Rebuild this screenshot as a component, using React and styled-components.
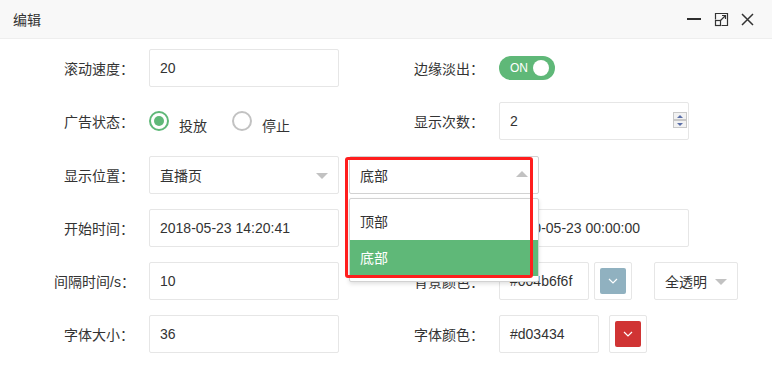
import React from 'react';
import styled, { createGlobalStyle } from 'styled-components';

const GlobalStyle = createGlobalStyle`
  body{
    margin: 0;
    background: #fff;
    font-family: "Liberation Sans", "Noto Sans CJK SC", sans-serif;
    font-size: 14px;
    color: #333;
  }
`;

function App() {
  return (
    <>
      <GlobalStyle />
      <Header>
        <Title>编辑</Title>
        <HeaderTools>
          <Minus />
          <svg width="15" height="15" viewBox="0 0 15 15" fill="none" stroke="#333" strokeWidth="1.2">
            <path d="M1.5 7.5 V1.5 H13.5 V13.5 H7.5" />
            <rect x="1.5" y="8.5" width="5" height="5" />
            <path d="M6.5 8.5 L11.5 3.5 M8 3.5 H11.5 V7" />
          </svg>
          <svg width="13" height="13" viewBox="0 0 13 13" stroke="#333" strokeWidth="1.5">
            <path d="M1 1 L12 12 M12 1 L1 12" />
          </svg>
        </HeaderTools>
      </Header>

      <Form>
        <Row>
          <Item>
            <Label>滚动速度：</Label>
            <Input $w={190}>20</Input>
          </Item>
          <Item>
            <Label>边缘淡出：</Label>
            <Switch>
              <span>ON</span>
              <Knob />
            </Switch>
          </Item>
        </Row>

        <Row $bottom={16}>
          <Item>
            <Label>广告状态：</Label>
            <Radio $checked />
            <RadioText>投放</RadioText>
            <Radio />
            <RadioText>停止</RadioText>
          </Item>
          <Item>
            <Label>显示次数：</Label>
            <Input $w={190}>
              2
              <Spinner>
                <SpinBtn><SpinArrow $up /></SpinBtn>
                <SpinBtn><SpinArrow /></SpinBtn>
              </Spinner>
            </Input>
          </Item>
        </Row>

        <Row>
          <Item>
            <Label>显示位置：</Label>
            <Select $w={190}>
              直播页
              <Arrow />
            </Select>
            <SelectWrap>
              <Select $w={190} $open>
                底部
                <Arrow $up />
              </Select>
              <Dropdown>
                <Option>顶部</Option>
                <Option $active>底部</Option>
              </Dropdown>
              <Highlight />
            </SelectWrap>
          </Item>
        </Row>

        <Row>
          <Item>
            <Label>开始时间：</Label>
            <Input $w={190}>2018-05-23 14:20:41</Input>
          </Item>
          <Item>
            <Label>结束时间：</Label>
            <Input $w={190}>2020-05-23 00:00:00</Input>
          </Item>
        </Row>

        <Row>
          <Item>
            <Label>间隔时间/s：</Label>
            <Input $w={190}>10</Input>
          </Item>
          <Item>
            <Label>背景颜色：</Label>
            <Input $w={90}>#004b6f6f</Input>
            <ColorPicker $gap={5}>
              <ColorSwatch $color="#90b1c0">
                <Chevron />
              </ColorSwatch>
            </ColorPicker>
            <Select $w={84} $gap={22}>
              全透明
              <Arrow />
            </Select>
          </Item>
        </Row>

        <Row $top={5}>
          <Item>
            <Label>字体大小：</Label>
            <Input $w={190}>36</Input>
          </Item>
          <Item>
            <Label>字体颜色：</Label>
            <Input $w={100}>#d03434</Input>
            <ColorPicker $gap={10}>
              <ColorSwatch $color="#d03434">
                <Chevron />
              </ColorSwatch>
            </ColorPicker>
          </Item>
        </Row>
      </Form>
    </>
  );
}

function Chevron() {
  return (
    <svg width="10" height="6" viewBox="0 0 10 6" fill="none" stroke="#fff" strokeWidth="1.2">
      <path d="M1 1 L5 5 L9 1" />
    </svg>
  );
}

export default App;

const Header = styled.div`
  height: 38px;
  background: #f8f8f8;
  border-bottom: 1px solid #eee;
  display: flex;
  align-items: center;
  justify-content: space-between;
  padding: 0 18px 0 13px;
`;

const Title = styled.div`
  font-size: 14px;
  color: #333;
`;

const HeaderTools = styled.div`
  display: flex;
  align-items: center;
  gap: 12px;
`;

const Minus = styled.span`
  display: block;
  width: 14px;
  height: 2px;
  background: #2e2e2e;
  margin-right: 1px;
`;

const Form = styled.div`
  padding: 10px 0 0 39px;
`;

const Row = styled.div`
  display: flex;
  height: 38px;
  margin-top: ${p => p.$top || 0}px;
  margin-bottom: ${p => p.$bottom || 15}px;
`;

const Item = styled.div`
  display: flex;
  align-items: center;
  flex: none;
  width: 350px;
  & > *{
    flex-shrink: 0;
  }
`;

const Label = styled.label`
  width: 80px;
  padding: 0 15px;
  text-align: right;
  white-space: nowrap;
  color: #333;
`;

const Input = styled.div`
  position: relative;
  box-sizing: border-box;
  width: ${p => p.$w}px;
  height: 38px;
  border: 1px solid #e6e6e6;
  border-radius: 2px;
  padding-left: 10px;
  display: flex;
  align-items: center;
  background: #fff;
  color: #333;
  white-space: nowrap;
  overflow: hidden;
`;

const Spinner = styled.div`
  position: absolute;
  right: 1px;
  top: 9px;
  display: flex;
  flex-direction: column;
`;

const SpinBtn = styled.span`
  box-sizing: border-box;
  width: 14px;
  height: 8px;
  border: 1px solid #c8c8c8;
  background: #f2f2f2;
  display: flex;
  align-items: center;
  justify-content: center;
`;

const SpinArrow = styled.span`
  width: 0;
  height: 0;
  border-left: 3px solid transparent;
  border-right: 3px solid transparent;
  ${p => p.$up ? 'border-bottom: 3px solid #5b6fa8;' : 'border-top: 3px solid #5b6fa8;'}
`;

const Switch = styled.div`
  box-sizing: border-box;
  width: 56px;
  height: 24px;
  border-radius: 20px;
  background: #5fb878;
  display: flex;
  align-items: center;
  justify-content: space-between;
  padding: 0 6px 0 11px;
  span{
    color: #fff;
    font-size: 12px;
  }
`;

const Knob = styled.i`
  width: 16px;
  height: 16px;
  border-radius: 50%;
  background: #fff;
`;

const Radio = styled.span`
  box-sizing: border-box;
  width: 20px;
  height: 20px;
  border-radius: 50%;
  border: 2px solid ${p => p.$checked ? '#5fb878' : '#c2c2c2'};
  display: flex;
  align-items: center;
  justify-content: center;
  margin-right: 10px;
  &::after{
    content: '';
    display: ${p => p.$checked ? 'block' : 'none'};
    width: 10px;
    height: 10px;
    border-radius: 50%;
    background: #5fb878;
  }
`;

const RadioText = styled.span`
  margin-top: 7px;
  margin-right: 25px;
  color: #333;
`;

const Select = styled.div`
  position: relative;
  box-sizing: border-box;
  width: ${p => p.$w}px;
  height: 38px;
  margin-left: ${p => p.$gap || 0}px;
  border: 1px solid ${p => p.$open ? '#d2d2d2' : '#e6e6e6'};
  border-radius: 2px;
  padding-left: 10px;
  display: flex;
  align-items: center;
  background: #fff;
  color: #333;
  white-space: nowrap;
`;

const Arrow = styled.i`
  position: absolute;
  right: 10px;
  top: 50%;
  margin-top: ${p => p.$up ? -4 : -2}px;
  width: 0;
  height: 0;
  border-left: 6px solid transparent;
  border-right: 6px solid transparent;
  ${p => p.$up ? 'border-bottom: 6px solid #c2c2c2;' : 'border-top: 6px solid #c2c2c2;'}
`;

const SelectWrap = styled.div`
  position: relative;
  margin-left: 10px;
  z-index: 10;
`;

const Dropdown = styled.div`
  position: absolute;
  top: 42px;
  left: 0;
  box-sizing: border-box;
  width: 190px;
  padding: 5px 0;
  border: 1px solid #d2d2d2;
  border-radius: 2px;
  background: #fff;
  box-shadow: 0 2px 4px rgba(0, 0, 0, .12);
`;

const Option = styled.div`
  line-height: 36px;
  padding: 0 10px;
  background: ${p => p.$active ? '#5fb878' : '#fff'};
  color: ${p => p.$active ? '#fff' : '#333'};
`;

const Highlight = styled.div`
  position: absolute;
  left: -4px;
  top: 1px;
  box-sizing: border-box;
  width: 188px;
  height: 121px;
  border: 3px solid #ff1e1e;
  border-radius: 3px;
  pointer-events: none;
`;

const ColorPicker = styled.div`
  box-sizing: border-box;
  width: 38px;
  height: 38px;
  margin-left: ${p => p.$gap}px;
  border: 1px solid #e6e6e6;
  border-radius: 2px;
  padding: 5px;
  background: #fff;
`;

const ColorSwatch = styled.div`
  width: 100%;
  height: 100%;
  border-radius: 2px;
  background: ${p => p.$color};
  display: flex;
  align-items: center;
  justify-content: center;
`;
